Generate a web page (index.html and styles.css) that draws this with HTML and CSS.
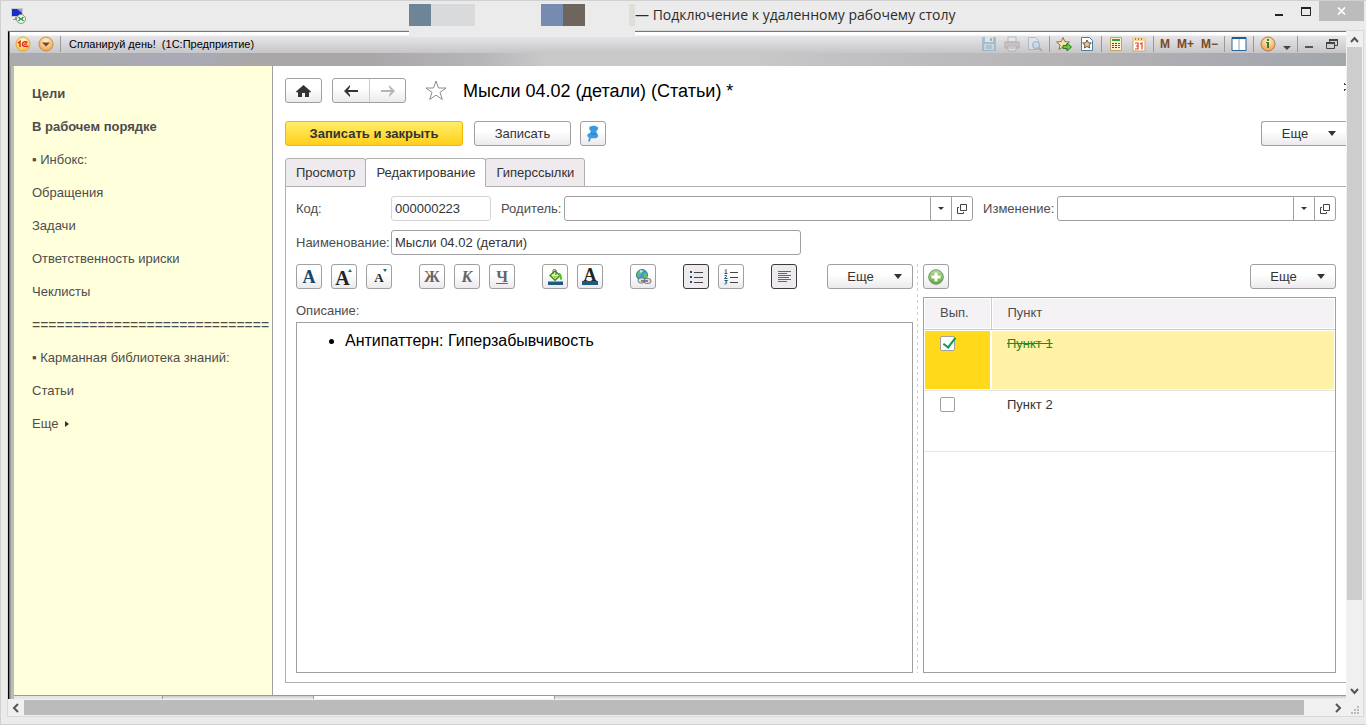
FILE: index.html
```
<!DOCTYPE html>
<html lang="ru">
<head>
<meta charset="utf-8">
<title>Подключение к удаленному рабочему столу</title>
<link rel="stylesheet" href="styles.css">
</head>
<body>
<div class="rdp">
  <header class="rdp-title">
    <svg class="rdp-icon" width="17" height="17" viewBox="0 0 17 17"><path d="M1 1h12v9H1z" fill="#c9ccd0"/><path d="M2 2h10v7H2z" fill="#1a2fc0"/><path d="M7 2h5v4z" fill="#7f9bea"/><path d="M5 10h4v2H5zM3 12h7v1H3z" fill="#8d9297"/><circle cx="11" cy="12" r="4.500" fill="#f4f6f4" stroke="#8a8f8a"/><path d="M8.500 10l2 2-2 2M13.500 10l-2 2 2 2" fill="none" stroke="#1c9a2c" stroke-width="1.300"/></svg>
    <div class="rdp-caption">
      <div class="mosaic"><i class="m1"></i><i class="m2"></i><i class="m3"></i><i class="m4"></i><i class="m5"></i></div>
      <span>— Подключение к удаленному рабочему столу</span>
    </div>
    <div class="rdp-buttons">
      <button type="button" aria-label="Свернуть окно"><svg width="10" height="14" viewBox="0 0 10 14"><path d="M1 10h8v2H1z" fill="#222"/></svg></button>
      <button type="button" aria-label="Развернуть окно"><svg width="12" height="14" viewBox="0 0 12 14"><path d="M1.500 4h9v7.500h-9z" fill="none" stroke="#222"/><path d="M1 3h10v2H1z" fill="#222"/></svg></button>
      <button type="button" class="rdp-close" aria-label="Закрыть окно"><svg width="9" height="8" viewBox="0 0 9 8"><path d="M1 .5l7 7M8 .5l-7 7" stroke="#fff" stroke-width="1.700"/></svg></button>
    </div>
  </header>

  <div class="viewport">
    <div class="app">
      <div class="app-title">
        <svg width="16" height="16" viewBox="0 0 16 16"><defs><radialGradient id="g1" cx=".5" cy=".3" r=".7"><stop offset="0" stop-color="#fffbd0"/><stop offset="1" stop-color="#fcc62c"/></radialGradient><radialGradient id="g2" cx=".5" cy=".3" r=".7"><stop offset="0" stop-color="#fff0cf"/><stop offset="1" stop-color="#f0a246"/></radialGradient></defs><circle cx="8" cy="8" r="7" fill="url(#g1)" stroke="#e7a04e"/><path d="M3 7l2-1.500V11M12.500 6.500C10 4.800 7.500 6 7.500 8.200S9 10.500 13.500 10.500M12 8.300c-1.500-.8-2.500-.2-2.500.5" fill="none" stroke="#d8231c" stroke-width="1.400"/></svg>
        <svg width="16" height="16" viewBox="0 0 16 16"><circle cx="8" cy="8" r="7" fill="url(#g2)" stroke="#c98a4a"/><path d="M4 6.500h8L8 10.500z" fill="#6b4a35"/></svg>
        <i class="vline"></i>
        <span class="app-name">Спланируй день!&nbsp; (1С:Предприятие)</span>
        <div class="app-tools">
          <svg class="dim" width="16" height="16" viewBox="0 0 16 16"><path d="M1 1h14v14H1z" fill="#85a9c4"/><path d="M4 1h8v5H4z" fill="#dfe9ef"/><path d="M3 8h10v6H3z" fill="#c5d8e4"/><path d="M5 10h6M5 12h6" stroke="#6f97b5"/><path d="M9 2h2v3H9z" fill="#6f97b5"/></svg>
          <svg class="dim" width="16" height="16" viewBox="0 0 16 16"><path d="M4 1h8v5H4z" fill="#e9edf2" stroke="#8fa3b8"/><path d="M1 6h14v6H1z" fill="#c5b4ae" stroke="#a2908c"/><path d="M4 10h8v5H4z" fill="#eef0f3" stroke="#8fa3b8"/><path d="M5 12h6" stroke="#a88"/></svg>
          <svg class="dim" width="16" height="16" viewBox="0 0 16 16"><path d="M1.500 1.500h7l3 3v9h-10z" fill="#e0e9f1" stroke="#8ba7bf"/><circle cx="9" cy="9" r="3.500" fill="#c3dcec" stroke="#7d8ea0"/><path d="M11.500 11.500l3.500 3.500" stroke="#b08d80" stroke-width="2"/></svg>
          <i class="vline"></i>
          <svg width="16" height="16" viewBox="0 0 16 16"><path d="M7 1.500l1.800 4 4.700.5-3.500 3 1 4.500-4-2.400-4 2.400 1-4.500-3.500-3 4.700-.5z" fill="#f4dfae" stroke="#8b7a50"/><path d="M7 9.500h4V7l4.500 4-4.500 4v-2.500H7z" fill="#5fce35" stroke="#2a7a22"/></svg>
          <svg width="16" height="16" viewBox="0 0 16 16"><path d="M2.500 1.500h8l3 3v10h-11z" fill="#fff" stroke="#4d7da3"/><path d="M8 4l1.300 2.700 3 .3-2.200 2 .6 3L8 10.500 5.300 12l.6-3-2.200-2 3-.3z" fill="#eec883" stroke="#5d5a52"/></svg>
          <i class="vline"></i>
          <svg width="16" height="16" viewBox="0 0 16 16"><path d="M2.500 1.500h11v13h-11z" fill="#fff1cf" stroke="#c3a067"/><path d="M4 3h8v2H4z" fill="#35a32c"/><path d="M4 7h2v1H4zm3 0h2v1H7zM4 9h2v1H4zm3 0h2v1H7zm-3 2h2v1H4zm3 0h2v1H7z" fill="#55432d"/><path d="M10 7h2v1h-2zm0 2h2v1h-2zm0 2h2v1h-2z" fill="#df3020"/></svg>
          <svg width="16" height="16" viewBox="0 0 16 16"><path d="M2 2h12v13H2z" fill="#fff" stroke="#cba36c"/><path d="M1.500 1h13v4h-13z" fill="#f8d796"/><path d="M4 2h1v2H4zm3 0h1v2H7zm3 0h1v2h-1z" fill="#a67c3f"/><path d="M4 7h3v6H4M5 10h2M9 8l2-1v6.500" fill="none" stroke="#ef3a1e" stroke-width="1.200"/></svg>
          <i class="vline"></i>
          <b class="mem">M</b><b class="mem">M+</b><b class="mem">M−</b>
          <i class="vline"></i>
          <svg width="16" height="16" viewBox="0 0 16 16"><path d="M1 1.500h14v13H1z" fill="#fff" stroke="#2f6497"/><path d="M1 1h14v2H1z" fill="#225b91"/><path d="M8 3v11" stroke="#7aa6cc"/></svg>
          <i class="vline"></i>
          <svg width="16" height="16" viewBox="0 0 16 16"><circle cx="8" cy="8" r="7" fill="url(#g2)" stroke="#a68050"/><path d="M7 3h2v2H7zM6 6h3v6H7V7H6z" fill="#3e7b22"/></svg>
          <svg width="8" height="16" viewBox="0 0 8 16"><path d="M0 10h8l-4 4z" fill="#444"/></svg>
          <i class="vline"></i>
          <svg width="10" height="16" viewBox="0 0 10 16"><path d="M1 10h8v2H1z" fill="#555"/></svg>
          <svg class="restore" width="12" height="16" viewBox="0 0 12 16"><path d="M3.500 3.500h8v6h-8z" fill="#d0d0d2" stroke="#444"/><path d="M3 3h9v2H3z" fill="#444"/><path d="M.5 6.500h8v6h-8z" fill="#d0d0d2" stroke="#444"/><path d="M0 6h9v2H0z" fill="#444"/></svg>
        </div>
      </div>

      <div class="app-body">
        <nav class="side">
          <a href="#" class="strong">Цели</a>
          <a href="#" class="strong">В рабочем порядке</a>
          <a href="#">▪ Инбокс:</a>
          <a href="#">Обращения</a>
          <a href="#">Задачи</a>
          <a href="#">Ответственность ириски</a>
          <a href="#">Чеклисты</a>
          <a href="#" class="rule">=============================</a>
          <a href="#">▪ Карманная библиотека знаний:</a>
          <a href="#">Статьи</a>
          <a href="#" class="more">Еще <svg width="4" height="6" viewBox="0 0 4 6"><path d="M0 0l4 3-4 3z" fill="#333"/></svg></a>
        </nav>

        <main class="form">
          <div class="bar head">
            <button type="button" class="btn w37" aria-label="Домой"><svg width="15" height="12" viewBox="0 0 15 12"><path d="M7.500 0L0 6.500l1 1.200 1-.7v5h4V8h3v4h4V7l1 .7 1-1.200z" fill="#333"/></svg></button>
            <div class="pair">
              <button type="button" aria-label="Назад"><svg width="14" height="12" viewBox="0 0 14 12"><path d="M6 0v2L4 5h10v2H4l2 3v2L0 6z" fill="#333"/></svg></button>
              <button type="button" aria-label="Вперед"><svg width="14" height="12" viewBox="0 0 14 12"><path d="M8 0v2l2 3H0v2h10l-2 3v2l6-6z" fill="#b5b5b5"/></svg></button>
            </div>
            <svg class="fav" width="22" height="21" viewBox="0 0 22 21"><path d="M11 1l2.500 7h7.500l-6 4.300 2.300 7.200-6.300-4.300-6.300 4.300L7 12.300 1 8h7.500z" fill="#fff" stroke="#8c8c8c"/></svg>
            <h1>Мысли 04.02 (детали) (Статьи) *</h1>
            <button type="button" class="dots" aria-label="Меню формы"><svg width="2" height="8" viewBox="0 0 2 8"><path d="M0 0h1v1h1v1H0zM0 6h2v1H1v1H0z" fill="#444"/></svg></button>
          </div>

          <div class="bar cmds">
            <button type="button" class="btn primary">Записать и закрыть</button>
            <button type="button" class="btn save">Записать</button>
            <button type="button" class="btn w26" aria-label="Закрепить"><svg width="14" height="18" viewBox="0 0 14 18"><path d="M4 1.500C6 .3 11 .5 12 2.500c.8 1.800-1 2.800-1.800 3.500L11 8.500c1.500 1 1.500 3 .3 4C9 14 3 13.500 1.500 11.500.6 9.500 2.500 8.500 4 8l.8-2C3 5 2.500 2.800 4 1.500z" fill="#3b9be0"/><path d="M4 12.500l-1 4" stroke="#3b9be0" stroke-width="1.800"/><path d="M5 8c1.500 1.500 4 1.500 5 .5" fill="none" stroke="#1f79c0"/></svg></button>
            <button type="button" class="btn drop cut">Еще<i class="arr"></i></button>
          </div>

          <div class="tabs" role="tablist">
            <button type="button" role="tab" class="tab">Просмотр</button>
            <button type="button" role="tab" class="tab on" aria-selected="true">Редактирование</button>
            <button type="button" role="tab" class="tab">Гиперссылки</button>
          </div>

          <section class="panel">
            <div class="bar fields">
              <label class="lbl first" for="code">Код:</label>
              <input id="code" class="inp code" value="000000223" readonly>
              <label class="lbl gap" for="parent">Родитель:</label>
              <div class="combo parent"><input id="parent"><button type="button" aria-label="Выбрать родителя"><i class="arr sm"></i></button><button type="button" aria-label="Открыть родителя"><svg width="10" height="10" viewBox="0 0 10 10"><path d="M3.500.5h6v6h-6zM2 3.500H.5v6h6V8" fill="none" stroke="#444"/></svg></button></div>
              <label class="lbl gap" for="change">Изменение:</label>
              <div class="combo change"><input id="change"><button type="button" aria-label="Выбрать изменение"><i class="arr sm"></i></button><button type="button" aria-label="Открыть изменение"><svg width="10" height="10" viewBox="0 0 10 10"><path d="M3.500.5h6v6h-6zM2 3.500H.5v6h6V8" fill="none" stroke="#444"/></svg></button></div>
            </div>
            <div class="bar fields">
              <label class="lbl first" for="name">Наименование:</label>
              <input id="name" class="inp name" value="Мысли 04.02 (детали)">
            </div>

            <div class="split">
              <div class="left">
                <div class="bar tools">
                  <div class="grp">
                    <button type="button" class="btn w26 glyph navy" aria-label="Шрифт">A</button>
                    <button type="button" class="btn w26 glyph big" aria-label="Увеличить шрифт">A<i class="tri up"></i></button>
                    <button type="button" class="btn w26 glyph small" aria-label="Уменьшить шрифт">A<i class="tri down"></i></button>
                  </div>
                  <div class="grp">
                    <button type="button" class="btn w26 glyph grey">Ж</button>
                    <button type="button" class="btn w26 glyph grey it">К</button>
                    <button type="button" class="btn w26 glyph grey un">Ч</button>
                  </div>
                  <div class="grp">
                    <button type="button" class="btn w26" aria-label="Цвет фона"><svg width="16" height="16" viewBox="0 0 16 16"><path d="M1 12.500h15V16H1z" fill="#1c5b7a"/><path d="M3 6.500L8 2l5 4.500-5 5z" fill="#d9f5a8" stroke="#38791d" stroke-width="1.200"/><path d="M6 5V1.500C6 0 9 0 9 1.500V6" fill="none" stroke="#38791d"/><path d="M11 4c3-.5 4 2 4 6-1 1.500-2 1-2-.5z" fill="#53c123"/><path d="M5 7h6l-3 3z" fill="#8ee04d"/></svg></button>
                    <button type="button" class="btn w26 glyph bar-under" aria-label="Цвет текста">A</button>
                  </div>
                  <div class="grp">
                    <button type="button" class="btn w26" aria-label="Вставить ссылку"><svg width="17" height="16" viewBox="0 0 17 16"><circle cx="7" cy="6" r="5.500" fill="#3c9ed6" stroke="#2f7fae"/><path d="M3 3c2-2 4-2 5-1L6 5 4 8 2 6zM9 4l3 1v3l-3 1z" fill="#5cc35f"/><path d="M5 1.500c2-.8 3 0 3 .8L5 4z" fill="#c6f0e8"/><rect x="3" y="9" width="7" height="5" rx="2.500" fill="#ddd" stroke="#777"/><rect x="9" y="9.500" width="7" height="5" rx="2.500" fill="#ddd" stroke="#777"/><path d="M6 12h7" stroke="#666" stroke-width="1.500"/></svg></button>
                  </div>
                  <div class="grp">
                    <button type="button" class="btn w26 on" aria-label="Маркированный список"><svg width="15" height="14" viewBox="0 0 15 14"><path d="M1 1h2v2H1zm0 5h2v2H1zm0 5h2v2H1z" fill="#1c4f73"/><path d="M5 2.500h9M5 7.500h9M5 12.500h9" stroke="#444"/></svg></button>
                    <button type="button" class="btn w26" aria-label="Нумерованный список"><svg width="15" height="16" viewBox="0 0 15 16"><path d="M1 1.500l1-1V4M.5 4.500h3M.5 6.500h2v1l-2 2h3M.5 11.500h3l-2 1.500c2 0 2 2-1 2" fill="none" stroke="#1c5b7a"/><path d="M6 3.500h8M6 8.500h8M6 13.500h8" stroke="#444"/></svg></button>
                  </div>
                  <div class="grp">
                    <button type="button" class="btn w26 on" aria-label="Выравнивание"><svg width="15" height="13" viewBox="0 0 15 13"><path d="M1 1.500h13M1 3.500h9M1 5.500h13M1 7.500h11M1 9.500h13M1 11.500h9" stroke="#3f7396"/></svg></button>
                  </div>
                  <button type="button" class="btn drop">Еще<i class="arr"></i></button>
                </div>
                <div class="lbl desc" id="desc">Описание:</div>
                <div class="editor" contenteditable="true" role="textbox" aria-labelledby="desc" spellcheck="false"><ul><li>Антипаттерн: Гиперзабывчивость</li></ul></div>
              </div>
              <i class="divider"></i>
              <div class="right">
                <div class="bar">
                  <button type="button" class="btn w26" aria-label="Добавить"><svg width="16" height="16" viewBox="0 0 16 16"><defs><linearGradient id="g3" x2="0" y2="1"><stop offset="0" stop-color="#b5dc99"/><stop offset="1" stop-color="#5da83a"/></linearGradient></defs><circle cx="8" cy="8" r="7.300" fill="url(#g3)" stroke="#74966a"/><path d="M6.500 3.500h3v3h3v3h-3v3h-3v-3h-3v-3h3z" fill="#fff"/></svg></button>
                  <button type="button" class="btn drop">Еще<i class="arr"></i></button>
                </div>
                <div class="grid-box">
                  <table>
                    <thead><tr><th class="c1">Вып.</th><th>Пункт</th></tr></thead>
                    <tbody>
                      <tr class="sel"><td class="c1"><input type="checkbox" checked aria-label="Пункт 1"></td><td>Пункт 1</td></tr>
                      <tr><td class="c1"><input type="checkbox" aria-label="Пункт 2"></td><td>Пункт 2</td></tr>
                    </tbody>
                  </table>
                </div>
              </div>
            </div>
          </section>
        </main>
      </div>
      <div class="task"><i class="t0"></i><i class="t1"></i><i class="t2"></i><i class="t3"></i></div>
    </div>

    <div class="vbar">
      <svg width="15" height="16" viewBox="0 0 15 16"><path d="M4 11l3.500-4 3.500 4" fill="none" stroke="#555" stroke-width="2"/></svg>
      <i class="vthumb"></i>
      <svg width="15" height="16" viewBox="0 0 15 16"><path d="M4 6l3.500 4L11 6" fill="none" stroke="#555" stroke-width="2"/></svg>
    </div>
    <div class="hbar">
      <svg width="16" height="16" viewBox="0 0 16 16"><path d="M10 4L6 8l4 4" fill="none" stroke="#555" stroke-width="2"/></svg>
      <i class="hthumb"></i>
      <svg width="16" height="16" viewBox="0 0 16 16"><path d="M6 4l4 4-4 4" fill="none" stroke="#555" stroke-width="2"/></svg>
    </div>
    <svg class="grip" width="16" height="16" viewBox="0 0 16 16"><path d="M11 6h2v2h-2zM8 9h2v2H8zm3 0h2v2h-2zM5 12h2v2H5zm3 0h2v2H8zm3 0h2v2h-2z" fill="#bbb"/></svg>
  </div>
</div>
</body>
</html>
```
FILE: styles.css
```
* { box-sizing: border-box; }
body { margin: 0; font: 13px/16px "Liberation Sans", Arial, sans-serif; color: #333; }
button, input { font: inherit; color: inherit; }
button { padding: 0; border: 0; background: none; display: flex; align-items: center; justify-content: center; }
a { color: inherit; text-decoration: none; }
svg { display: block; flex: none; }

.rdp { height: 100vh; display: flex; flex-direction: column; background: #ebebeb; border: 1px solid #d0d0d0; border-right: 0; padding: 0 2px 7px 6px; }
.rdp-title { height: 29px; display: grid; grid-template-columns: 1fr auto 1fr; position: relative; z-index: 1; }
.rdp-icon { margin: 6px 0 0 3px; }
.rdp-caption { display: flex; min-width: 553px; font: 14px/28px "Open Sans", "Noto Sans", sans-serif; color: #2b2b2b; white-space: nowrap; }
.mosaic { flex: none; width: 226px; height: 33px; margin-top: 3px; background: #ebebeb; display: flex; }
.mosaic i { height: 22px; width: 22px; }
.m1 { background: #6e8598; }
.mosaic .m2 { width: 44px; margin-right: 66px; background: #d9dadb; }
.m3 { background: #768bb0; }
.m4 { background: #6e665e; }
.mosaic .m5 { width: 6px; margin-left: auto; background: #dfdfda; }
.rdp-buttons { display: flex; justify-content: flex-end; align-items: flex-start; }
.rdp-buttons button { width: 27px; height: 20px; }
.rdp-buttons .rdp-close { width: 45px; background: #bcbcbc; }

.viewport { flex: 1; min-height: 0; display: grid; grid-template-columns: minmax(0, 1fr) 17px; grid-template-rows: minmax(0, 1fr) 17px; border: 1px solid #d9d9d9; background: #f0f0f0; }
.app { display: flex; flex-direction: column; min-height: 0; border-top: 1px solid #777; border-left: 1px solid #000; padding-left: 5px; background: linear-gradient(90deg, #777 0 1px, #bbb 2px 5px, #fff 5px); }
.app-title { flex: none; height: 34px; margin-left: -4px; padding: 3px 8px 13px 5px; display: flex; align-items: center; gap: 7px; background: linear-gradient(90deg, #a9abae 0 7%, #a9aab5 10% 14%, #aaa7a9 18% 27%, #b5b4b9 35%, #c8c8c8 40% 56%, #bfbfc4 65%, #b4b2b3 80%, #a9a9b2 92%, #a2a7aa) 0 21px / 100% 13px no-repeat, linear-gradient(#fff 0 3px, #e6e4e6 4px, #c6c6c8 21px); }
.vline { width: 1px; height: 16px; margin: 0 -1px; background: #999; flex: none; }
.app-name { font-size: 11px; color: #000; margin-left: 2px; }
.app-tools { margin-left: auto; display: flex; align-items: center; gap: 7px; }
.dim { opacity: .6; }
.mem { font-size: 12px; color: #7a4a25; }
.restore { margin-left: 5px; }

.app-body { flex: 1; min-height: 0; display: flex; }
.side { flex: none; width: 259px; background: #ffffdc; border-right: 1px solid #a0a0a0; padding: 20px 0 0 18px; display: flex; flex-direction: column; gap: 17px; color: #4d4d4d; white-space: nowrap; }
.strong { font-weight: bold; }
.rule { font-size: 14px; }
.more { display: flex; align-items: center; gap: 7px; }

.form { flex: 1; min-width: 0; background: #fff; padding: 12px 0 12px 12px; display: flex; flex-direction: column; overflow: hidden; }
.bar { display: flex; align-items: center; flex: none; height: 25px; }
.btn { height: 25px; border: 1px solid #a0a0a0; border-radius: 3px; background: linear-gradient(#fff 40%, #ece9ec); flex: none; }
.btn.on { border-color: #3c3c3c; background: #eeeaee; }
.w37 { width: 37px; }
.w26 { width: 26px; }
.pair { display: flex; margin-left: 10px; border: 1px solid #a0a0a0; border-radius: 3px; height: 25px; background: linear-gradient(#fff 40%, #ece9ec); }
.pair button { width: 36px; }
.pair button + button { border-left: 1px solid #ccc; }
.fav { margin: 0 16px 0 19px; }
h1 { margin: 0; font-size: 18px; line-height: 24px; font-weight: normal; color: #000; }
.dots { width: 2px; margin: 0 0 7px auto; }
.cmds { margin-top: 18px; }
.primary { width: 178px; font-weight: bold; border-color: #f0b800; background: linear-gradient(#ffee68, #ffcf1c); }
.save { width: 97px; margin: 0 9px 0 11px; }
.drop { width: 86px; margin-left: auto; gap: 20px; padding-left: 9px; }
.cut { width: 85px; border-right: 0; border-radius: 3px 0 0 3px; padding-left: 10px; }
.arr { border: 4px solid transparent; border-top: 5px solid #333; border-bottom: 0; }
.arr.sm { border-width: 3px 3px 0; }

.tabs { display: flex; margin-top: 12px; flex: none; height: 29px; position: relative; }
.tab { height: 29px; border: 1px solid #b0b0b0; background: #eeeaee; border-radius: 3px 3px 0 0; padding: 0 10px; margin-right: -1px; }
.tab.on { background: #fff; border-bottom-color: #fff; position: relative; }
.panel { flex: 1; min-height: 0; margin-top: -1px; border: 1px solid #b0b0b0; border-right: 0; padding: 9px 10px; display: flex; flex-direction: column; gap: 9px; }
.lbl { color: #4d4d4d; }
.first { width: 95px; flex: none; }
.inp { height: 25px; border: 1px solid #a0a0a0; border-radius: 3px; padding: 0 3px; min-width: 0; background: #fff; }
.code { width: 100px; border-color: #d5d5d5; }
.name { width: 410px; }
.gap { margin: 0 3px 0 10px; }
.combo { display: flex; height: 25px; min-width: 0; border: 1px solid #a0a0a0; border-radius: 3px; }
.combo input { flex: 1; min-width: 0; border: 0; padding: 0 3px; background: none; }
.combo button { width: 21px; border-left: 1px solid #a0a0a0; }
.parent { flex: 410; }
.change { flex: 279; }

.split { flex: 1; min-height: 0; display: grid; grid-template-columns: minmax(0, 617fr) 10px minmax(0, 413fr); }
.left, .right { display: flex; flex-direction: column; min-height: 0; }
.divider { width: 1px; margin-left: 4px; background: repeating-linear-gradient(#d0d0d0 0 3px, #fff 3px 6px); }
.tools { gap: 27px; }
.grp { display: flex; gap: 9px; }
.glyph { font: bold 18px/20px "Liberation Serif", serif; color: #222; position: relative; }
.navy { color: #15486b; }
.big { font-size: 20px; padding: 3px 3px 0 0; }
.small { font-size: 13px; padding-top: 2px; }
.grey { color: #666; font-size: 16px; }
.it { font-style: italic; }
.un { text-decoration: underline; }
.tri { position: absolute; right: 4px; top: 4px; border: 2px solid transparent; }
.up { border-bottom: 3px solid #1c6a8e; border-top: 0; }
.down { border-top: 3px solid #1c6a8e; border-bottom: 0; }
.bar-under { padding-bottom: 3px; }
.bar-under::after { content: ""; position: absolute; left: 4px; right: 4px; bottom: 3px; height: 4px; background: #1c5b7a; }
.desc { margin: 14px 0 3px; }
.editor { flex: 1; min-height: 0; border: 1px solid #a0a0a0; font-size: 16px; line-height: 18px; color: #000; padding: 9px 8px; }
.editor ul { margin: 0; padding-left: 40px; }
.grid-box { flex: 1; margin-top: 8px; border: 1px solid #a0a0a0; min-height: 0; }
table { width: 100%; border-collapse: collapse; table-layout: fixed; }
th { height: 31px; font-weight: normal; text-align: left; color: #4d4d4d; background: #f5f2f6; padding: 0 16px; border-bottom: 1px solid #ccc; box-shadow: inset 0 0 0 1px #fff; }
th.c1 { width: 67px; border-right: 1px solid #ccc; }
td { height: 61px; vertical-align: top; padding: 6px 16px 0; border-bottom: 1px solid #e5e5e5; }
td input { appearance: none; display: block; width: 15px; height: 15px; margin: 0; border: 1px solid #a0a0a0; border-radius: 2px; background: #fff; position: relative; }
td input:checked::after { content: ""; position: absolute; left: 5px; top: -2px; width: 5px; height: 11px; border: solid #0a9950; border-width: 0 2px 2px 0; transform: rotate(38deg); }
.sel td { background: #fff2a6; color: #1f8a1f; text-decoration: line-through; box-shadow: inset 0 0 0 1px #fff; }
.sel td.c1 { background: #ffd91a; }

.task { flex: none; height: 4px; border-top: 1px solid #999; display: flex; }
.t0 { width: 149px; background: #e6e6e6; border-right: 1px solid #999; }
.t1 { width: 151px; background: linear-gradient(#ccc, #f0eaee); border-right: 1px solid #999; }
.t2 { width: 241px; background: #fff; border-right: 1px solid #999; }
.t3 { flex: 1; background: linear-gradient(#ccc, #f0eaee); }
.vbar { display: flex; flex-direction: column; padding-left: 1px; border-left: 0; }
.vthumb { flex: 1; margin-bottom: 83px; background: #cdcdcd; width: 15px; }
.hbar { display: flex; padding-top: 1px; }
.hthumb { flex: 1; margin-right: 26px; height: 15px; background: #bbb; }
.grip { align-self: end; }
```
